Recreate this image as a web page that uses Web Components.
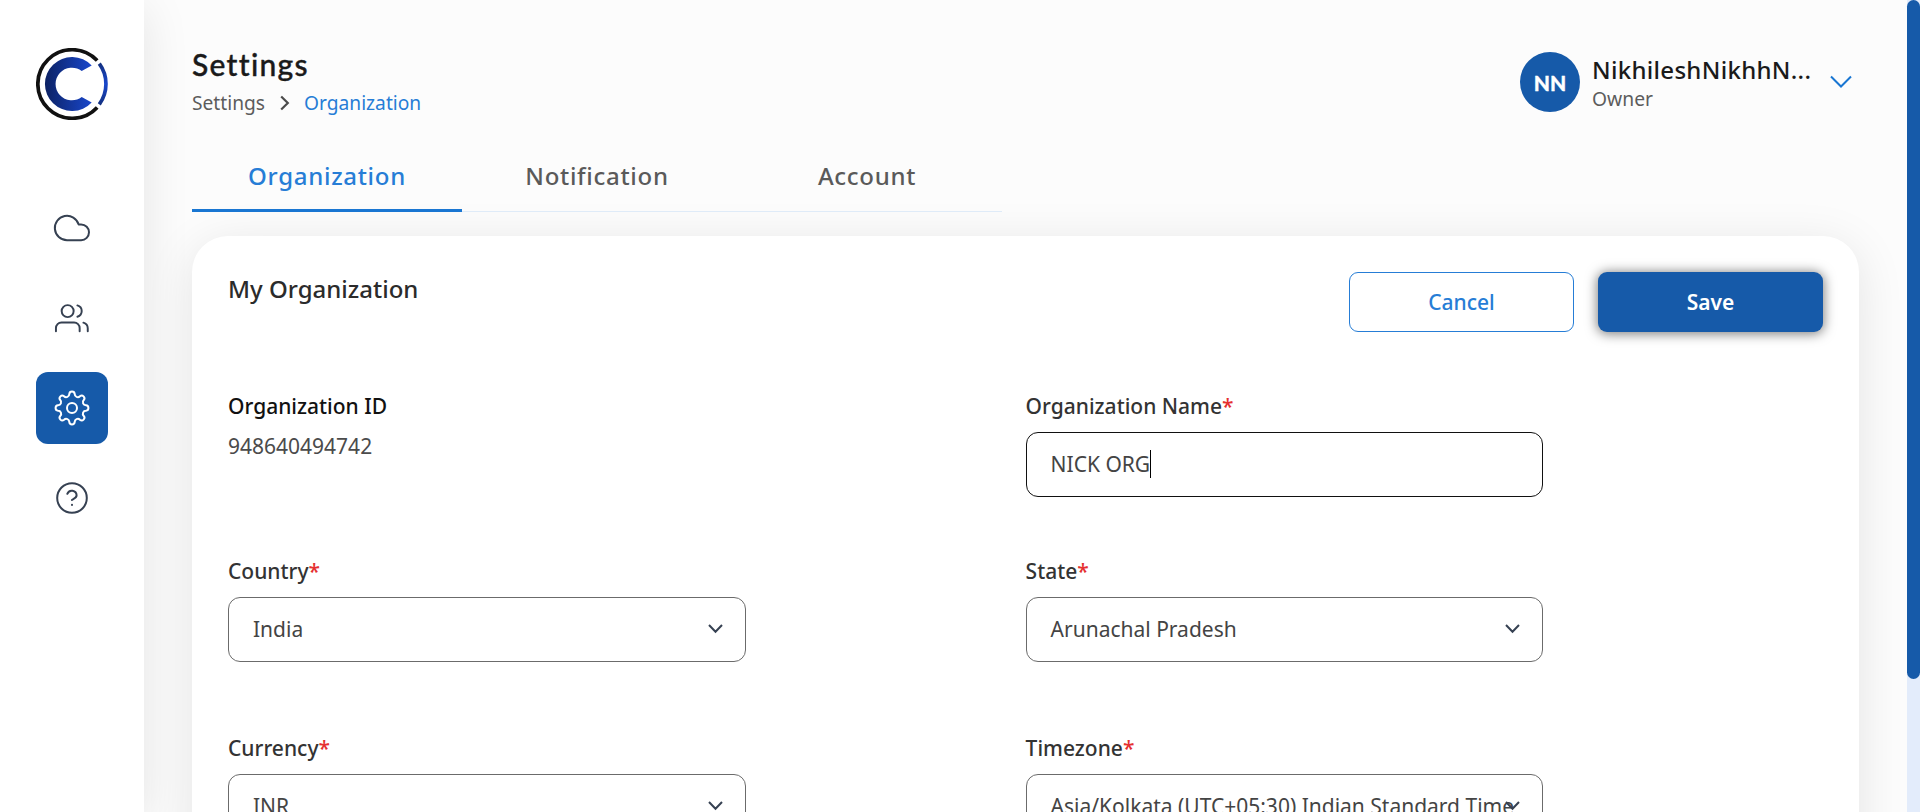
<!DOCTYPE html>
<html lang="en"><head><meta charset="utf-8"><title>Settings</title>
<style>
html,body{margin:0;height:100%;overflow:hidden}
body{font-family:"Noto Sans",sans-serif;color:#1a1a1a;background:#fcfcfc}
</style></head>
<body>
<settings-app></settings-app>
<script>
const define = (name, html) => {
  const template = document.createElement('template');
  template.innerHTML = html;
  customElements.define(name, class extends HTMLElement {
    constructor() {
      super();
      this.attachShadow({mode: 'open'}).appendChild(template.content.cloneNode(true));
    }
  });
};

define('brand-logo', `
<style>:host{display:block;width:72px;height:72px}svg{display:block}</style>
<svg width="72" height="72" viewBox="0 0 72 72" fill="none">
  <defs><linearGradient id="g" x1="9" y1="0" x2="56" y2="0" gradientUnits="userSpaceOnUse"><stop stop-color="#0c2264"/><stop offset="1" stop-color="#1947cc"/></linearGradient>
  <linearGradient id="h" x1="0" y1="15" x2="0" y2="57" gradientUnits="userSpaceOnUse"><stop stop-color="#12307f"/><stop offset=".5" stop-color="#1947cc"/><stop offset="1" stop-color="#12307f"/></linearGradient></defs>
  <path d="M61.2 12.6A34.3 34.3 0 1 0 61.2 59.4" stroke="#111" stroke-width="3.7"/>
  <path d="M63.3 15.7A34.3 34.3 0 0 1 63.3 56.3" stroke="url(#h)" stroke-width="3.7"/>
  <path d="M55.7 17.6A27 27 0 1 0 55.7 54.4L45.7 49A16.3 16.3 0 1 1 45.7 23Z" fill="url(#g)"/>
</svg>`);

define('nav-item', `
<style>:host{display:flex;width:72px;height:72px;border-radius:12px;align-items:center;justify-content:center;color:#364152}
:host([active]){background:#165aa9;color:#fff}</style><slot></slot>`);

define('side-bar', `
<style>:host{display:flex;flex-direction:column;align-items:center;width:144px;box-sizing:border-box;padding-top:48px;background:#fff;box-shadow:0 9px 48px rgba(0,0,0,.1);flex:none}
nav{display:flex;flex-direction:column;gap:18px;margin-top:72px}
svg{display:block;fill:none;stroke:currentColor;stroke-width:1.3;stroke-linecap:round;stroke-linejoin:round}</style>
<brand-logo></brand-logo>
<nav>
<nav-item><svg width="40" height="40" viewBox="0 0 24 24"><path stroke-width="1.2" d="M17.5 19.3H9a7.3 7.3 0 1 1 7-9.4h1.5a4.7 4.7 0 1 1 0 9.4Z"/></svg></nav-item>
<nav-item><svg width="36" height="36" viewBox="0 0 24 24"><path d="M17.1 20.9v-2.2a3.7 3.7 0 0 0-3.7-3.7H5a3.7 3.7 0 0 0-3.7 3.7v2.2"/><circle cx="9.1" cy="7.4" r="4"/><path d="M22.5 20.9v-2a4 4 0 0 0-2.9-3.8M15.6 3.6a3.95 3.95 0 0 1 0 7.6"/></svg></nav-item>
<nav-item active><svg width="36" height="36" viewBox="-18 -18 36 36"><g stroke-width="2"><circle r="5"/><path id="gear"/></g></svg></nav-item>
<nav-item><svg width="36" height="36" viewBox="0 0 36 36"><g stroke-width="2"><circle cx="18" cy="18" r="14.8"/><path d="M13.3 13.8a4.8 4.8 0 0 1 9.3 1.5c0 3.2-4.7 4.2-4.7 4.8M18 24.8v.1"/></g></svg></nav-item>
</nav>`);

define('crumb-trail', `
<style>:host{display:flex;align-items:center;font-size:19.2px;line-height:28px;font-weight:400;color:#5c5c5c}
b{font-weight:400;color:#267dd6}svg{margin:0 13px 0 14px}</style>
<span>Settings</span><svg width="12" height="16" viewBox="0 0 12 16" fill="none" stroke="#4b4b4b" stroke-width="2.2"><path d="M2.2 1.5 8.8 8l-6.6 6.5"/></svg><b>Organization</b>`);

define('user-menu', `
<style>:host{display:flex;align-items:center}
.av{width:60px;height:60px;border-radius:50%;background:#165aa9;color:#fff;font:900 21px Lato,sans-serif;-webkit-text-stroke:.3px #fff;display:flex;align-items:center;justify-content:center}
.t{margin-left:12px;width:222px;padding-top:2px}
.n{font-size:24px;line-height:32px;font-weight:500;letter-spacing:.3px;overflow:hidden;text-overflow:ellipsis;white-space:nowrap}
.r{font-size:19.3px;line-height:26px;font-weight:400;color:#5c5c5c}
svg{margin-left:16px}</style>
<div class="av">NN</div><div class="t"><div class="n">NikhileshNikhhN...</div><div class="r">Owner</div></div>
<svg width="22" height="14" viewBox="0 0 22 14" fill="none" stroke="#1976d2" stroke-width="2"><path d="M1 1.5l10 10 10-10"/></svg>`);

define('tab-item', `
<style>:host{display:flex;width:270px;height:72px;box-sizing:border-box;align-items:center;justify-content:center;font-size:24px;font-weight:500;letter-spacing:.7px;color:#5a5a5a;border-bottom:1px solid #dfebf8}
:host([active]){color:#267dd6;border-bottom:3px solid #1976d2;padding-top:2px}</style><slot></slot>`);

define('app-button', `
<style>:host{display:flex;width:225px;height:60px;box-sizing:border-box;border:1px solid #267dd6;border-radius:9px;align-items:center;justify-content:center;font-size:21px;font-weight:500;color:#267dd6;background:#fff}
:host([primary]){border:0;background:#165aa9;color:#fff;font-weight:600;box-shadow:0 1px 12px 1px rgba(0,0,0,.5)}</style><slot></slot>`);

define('field-label', `
<style>:host{display:block;font-size:21px;line-height:30px;font-weight:500;color:#333}
i{font-style:normal;color:#e53030}</style><slot></slot><i>*</i>`);

define('text-box', `
<style>:host{display:flex;align-items:center;position:relative;width:517.6px;height:65px;box-sizing:border-box;margin-top:11px;border:1px solid #6b6b6b;border-radius:12px;padding:0 24px 2px;font-size:21px;font-weight:400;color:#444;white-space:nowrap;overflow:hidden}
:host([focused]){border-color:#111}
.caret{display:none;width:1px;height:28px;background:#000}
:host([focused]) .caret{display:block}
svg{position:absolute;right:22px;top:26px}
:host([focused]) svg{display:none}</style>
<slot></slot><span class="caret"></span>
<svg width="15" height="10" viewBox="0 0 15 10" fill="none" stroke="#364152" stroke-width="2"><path d="M1 1l6.5 6.7L14 1"/></svg>`);

define('org-card', `
<style>:host{display:block;box-sizing:border-box;width:1667px;height:900px;margin-top:24px;background:#fff;border-radius:36px;box-shadow:0 9px 48px rgba(0,0,0,.1);padding:36px}
header{display:flex;gap:24px;height:60px}
h2{margin:0;flex:1;font-size:24px;line-height:34px;font-weight:500;color:#2b2b2b}
.grid{display:grid;grid-template-columns:797.6px 1fr;grid-template-rows:165px 177px auto;margin-top:59px}
.id{font-size:21px;line-height:30px;font-weight:500;color:#111}
.val{font-size:21px;line-height:30px;font-weight:400;margin-top:10px;color:#4b4b4b}</style>
<header><h2>My Organization</h2><app-button>Cancel</app-button><app-button primary>Save</app-button></header>
<div class="grid">
<div><div class="id">Organization ID</div><div class="val">948640494742</div></div>
<div><field-label>Organization Name</field-label><text-box focused>NICK ORG</text-box></div>
<div><field-label>Country</field-label><text-box>India</text-box></div>
<div><field-label>State</field-label><text-box>Arunachal Pradesh</text-box></div>
<div><field-label>Currency</field-label><text-box>INR</text-box></div>
<div><field-label>Timezone</field-label><text-box>Asia/Kolkata (UTC+05:30) Indian Standard Time</text-box></div>
</div>`);

define('page-scrollbar', `
<style>:host{display:block;width:13px;height:812px;background:#e3ecfb;flex:none;position:relative}
div{height:679px;background:#165aa9;border-radius:7px}</style><div></div>`);

define('settings-app', `
<style>:host{display:flex;width:1920px;height:812px;overflow:hidden}
main{flex:1;min-width:0;box-sizing:border-box;padding:45px 48px 0}
.top{display:flex;justify-content:space-between;height:95px;box-sizing:border-box}
h1{margin:0 0 6px;font:500 30px/38px Lato,sans-serif;letter-spacing:1.3px;-webkit-text-stroke:.4px #1a1a1a}
user-menu{height:72px;padding:1px 7px 0 0}
.tabs{display:flex}
side-bar{height:812px}</style>
<side-bar></side-bar>
<main><div class="top"><div><h1>Settings</h1><crumb-trail></crumb-trail></div><user-menu></user-menu></div>
<div class="tabs"><tab-item active>Organization</tab-item><tab-item>Notification</tab-item><tab-item>Account</tab-item></div>
<org-card></org-card></main>
<page-scrollbar></page-scrollbar>`);

// Eight-toothed cog: round tooth tips joined by concave round valleys.
const side = document.querySelector('settings-app').shadowRoot.querySelector('side-bar').shadowRoot;
const polar = (r, deg) => {
  const a = deg * Math.PI / 180;
  return (r * Math.sin(a)).toFixed(2) + ' ' + (-r * Math.cos(a)).toFixed(2);
};
let d = 'M' + polar(14.19, -11);
for (let k = 0; k < 8; k++) {
  const c = k * 45;
  d += 'A2.72 2.72 0 0 1 ' + polar(14.19, c + 11);
  d += 'A3.05 3.05 0 0 0 ' + polar(14.19, c + 34);
}
side.querySelector('#gear').setAttribute('d', d + 'Z');
</script>
</body></html>
